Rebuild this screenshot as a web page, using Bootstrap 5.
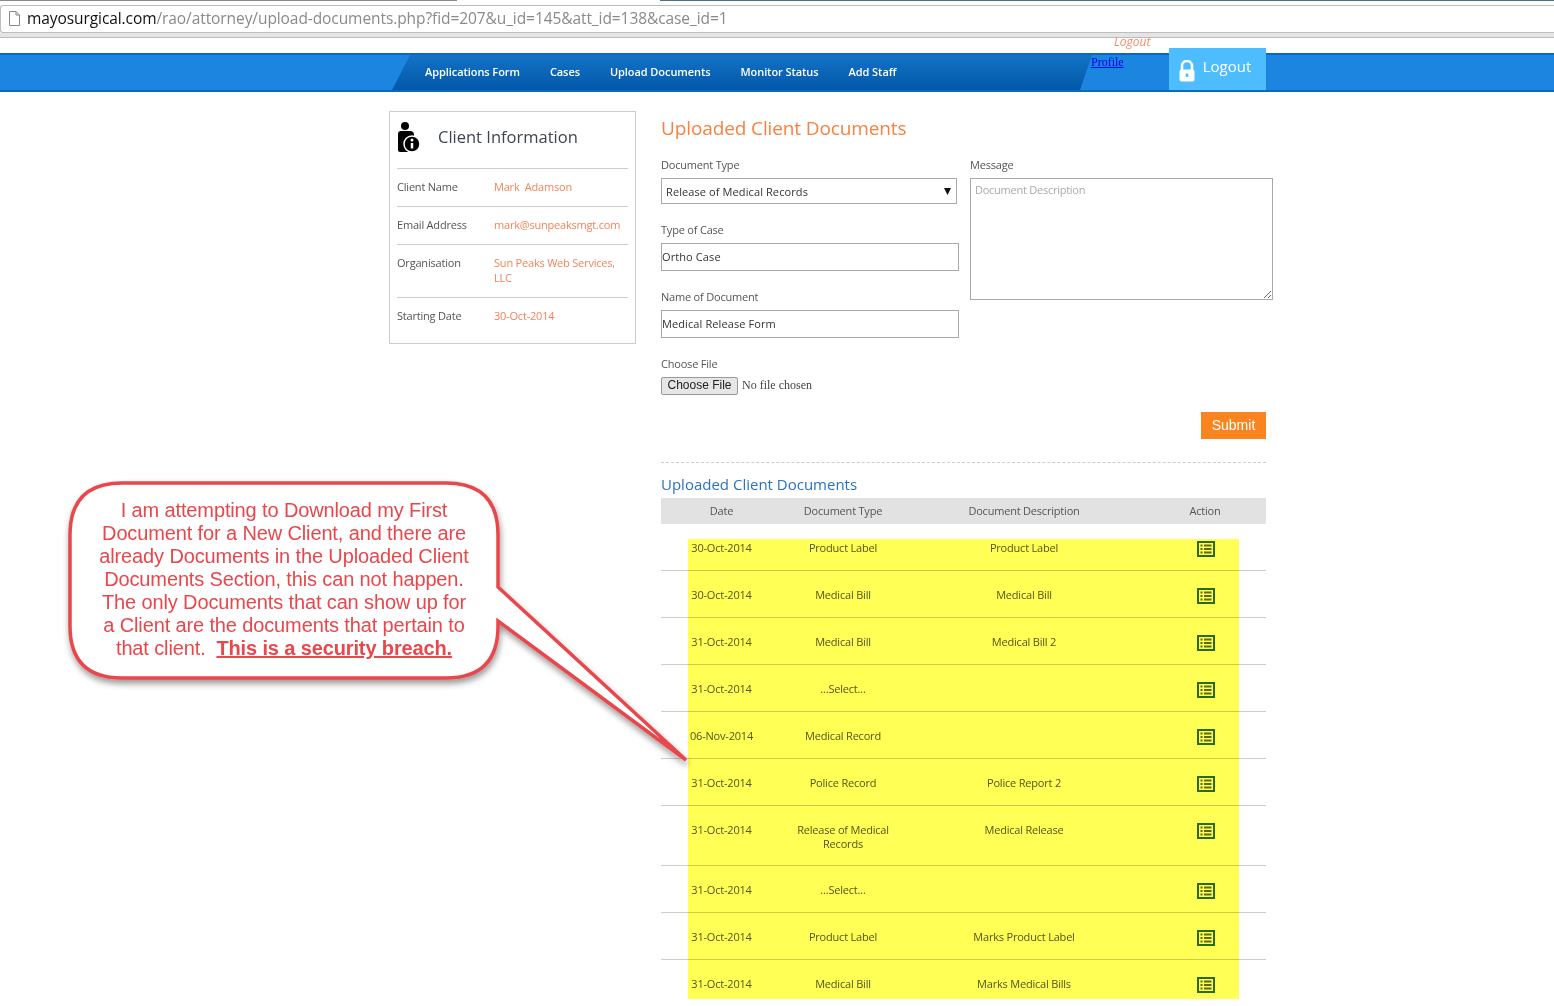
<!doctype html>
<html lang="en">
<head>
  <meta charset="utf-8" />
  <meta name="viewport" content="width=device-width, initial-scale=1" />
  <title>Upload Documents</title>
  <link href="https://cdn.jsdelivr.net/npm/bootstrap@5.3.6/dist/css/bootstrap.min.css" rel="stylesheet" />
  <style>
    html, body { height: 1006px; overflow: hidden; }
    body { position: relative; font-family: "Open Sans", sans-serif; font-size: 11px; line-height: 15px; letter-spacing: -.2px; color: #555; background: #fff; }

    .top-strip { height: 5px; }
    .top-strip div { height: 1px; }
    .strip-a { width: 457px; background: #8a8a8a; }
    .strip-b { width: 203px; }
    .strip-c { flex: 1; background: #4f6f8f; }
    .address-bar { height: 28px; border: 1px solid #bdbdbd; border-radius: 3px 0 0 3px; border-right: 0; background: #fff; padding: 0 0 2px 8px; gap: 7px; }
    .address-bar span { font-size: 15.5px; color: #8a8a8a; letter-spacing: -.08px; white-space: nowrap; }
    .address-bar b { font-weight: 400; color: #111; }
    .bar-under { height: 4px; background: #e4e4e4; border-bottom: 1px solid #bdbdbd; box-sizing: content-box; }

    .blue-bar { margin-top: 15px; height: 39px; background: #1c85e0; border-top: 2px solid #0a68bd; border-bottom: 2px solid #0a68bd; position: relative; }
    .dark-part { margin-left: 392px; width: 700px; padding: 0 0 2px 33px; gap: 30px; background: linear-gradient(#1472c6, #0258a8); clip-path: polygon(18px 0, 100% 0, calc(100% - 12px) 100%, 0 100%); }
    .dark-part .nav-link { padding: 0; color: #fff; font-size: 11px; font-weight: 600; letter-spacing: -.07px; }
    .profile-link { margin: 0 0 0 -1px; font-family: "Liberation Serif", serif; font-size: 12px; line-height: 14px; letter-spacing: 0; color: #00e; }
    .logout-btn { margin: -7px 0 0 45px; width: 97px; height: 42px; padding-left: 10px; gap: 8px; background: #4dbdff; color: #fff; font-size: 15px; letter-spacing: 0; text-decoration: none; }
    .logout-btn span { margin-bottom: 6px; }
    .logout-btn svg { margin-top: 3px; }
    .logout-small { position: absolute; left: 1114px; top: -21px; font-size: 12px; letter-spacing: 0; font-style: italic; color: #f58a66; }

    .page-main { padding: 19px 0 0 389px; gap: 25px; }
    .info-box { width: 247px; height: 233px; border: 1px solid #ccc; padding: 0 7px; flex-shrink: 0; }
    .info-head { height: 57px; gap: 15px; border-bottom: 1px solid #ccc; }
    .info-head svg { margin-bottom: 6px; }
    .info-head h4 { margin: 0 0 6px; font-size: 16.500px; line-height: 24px; letter-spacing: 0; font-weight: 400; color: #3c4650; }
    .info-row { padding: 10px 0 12px; border-bottom: 1px solid #ccc; }
    .info-row:last-child { border-bottom: 0; }
    .info-row .lbl { width: 97px; flex-shrink: 0; }
    .info-row .val { color: #f5835a; }

    .right-part { width: 605px; flex-shrink: 0; }
    .page-title { margin: 4px 0 15px; font-size: 19px; line-height: 27px; letter-spacing: -.12px; font-weight: 400; color: #f58242; }
    .form-cols { gap: 11px; width: 620px; }
    .left-form { width: 298px; }
    .right-form { width: 303px; }
    .field-lbl { display: block; margin-bottom: 6px; }
    .field-gap { margin-top: 18px; }
    .sel-field { width: 296px; height: 26px; padding: 1px 4px 0; border: 1px solid #aaa; border-radius: 0; font-size: 11px; line-height: 23px; letter-spacing: .1px; color: #333; background-size: 9px 8px; background-position: right 4px center; background-image: url("data:image/svg+xml,%3Csvg xmlns='http://www.w3.org/2000/svg' viewBox='0 0 9 8'%3E%3Cpath d='M1 1h7L4.500 8z' fill='%23111'/%3E%3C/svg%3E"); }
    .txt-field { height: 28px; padding: 0 0 2px 0; border: 1px solid #aaa; border-radius: 0; font-size: 11px; letter-spacing: .1px; color: #333; }
    .area-field { height: 122px; padding: 3px 4px; border: 1px solid #aaa; border-radius: 0; font-size: 11px; line-height: 15px; letter-spacing: -.25px; color: #333; }
    .area-field::placeholder { color: #aaa; }
    .file-field { display: block; height: 18px; font-family: "Liberation Serif", serif; font-size: 12px; letter-spacing: 0; color: #444; }
    .file-field::file-selector-button { height: 18px; padding: 0 5.500px 1px; margin-right: 4px; font-family: "Liberation Sans", sans-serif; font-size: 12px; color: #222; background: #e6e6e6; border: 1px solid #999; border-radius: 2px; }
    .submit-btn { margin-top: 17px; width: 65px; height: 27px; padding: 0; border: 0; border-radius: 0; background: #f98420; color: #fff; font-family: "Liberation Sans", sans-serif; font-size: 14px; letter-spacing: 0; }
    .dash-line { margin-top: 23px; border-top: 1px dashed #ccc; }
    .sub-title { margin: 10px 0 3px; font-size: 15px; line-height: 22px; letter-spacing: 0; font-weight: 400; color: #2a72c0; }

    .docs-table { table-layout: fixed; width: 605px; margin: 0; font-size: 11px; line-height: 14px; color: #555; }
    .docs-table th { height: 26px; padding: 0; font-weight: 400; text-align: center; vertical-align: middle; background: #e2e2e2; border: 0; color: #555; }
    .docs-table td { height: 47px; padding: 17px 4px 14px; text-align: center; vertical-align: top; border: 0; border-bottom: 1px solid #ccc; color: #555; background: transparent; }
    .docs-table tbody tr:first-child td { height: 46px; }
    .docs-table .act-cell { padding: 17px 3px 0 5px; line-height: 0; }
    .docs-table td:first-child { padding-left: 0; padding-right: 0; }

    .yellow-mark { position: absolute; left: 688px; top: 539px; width: 551px; height: 460px; background: #ffff55; mix-blend-mode: multiply; pointer-events: none; }
    .bubble-svg { position: absolute; left: 0; top: 0; width: 1554px; height: 1006px; pointer-events: none; }
    .bubble-text { position: absolute; left: 70px; top: 499px; width: 428px; text-align: center; font-family: "Liberation Sans", sans-serif; font-size: 20px; line-height: 23px; letter-spacing: -.13px; color: #e8474c; white-space: nowrap; }
    .bubble-text strong { text-decoration: underline; }
  </style>
</head>
<body>
  <div class="top-strip d-flex"><div class="strip-a"></div><div class="strip-b"></div><div class="strip-c"></div></div>
  <div class="address-bar d-flex align-items-center">
    <svg width="11" height="15" viewBox="0 0 11 15"><path d="M.5.500h6.500l3.500 3.500v10.500h-10zM7 .500v3.500h3.500" fill="#fff" stroke="#888"/></svg>
    <span><b>mayosurgical.com</b>/rao/attorney/upload-documents.php?fid=207&amp;u_id=145&amp;att_id=138&amp;case_id=1</span>
  </div>
  <div class="bar-under"></div>

  <div class="blue-bar d-flex">
    <span class="logout-small">Logout</span>
    <nav class="nav dark-part align-items-center flex-nowrap">
      <a class="nav-link" href="#">Applications Form</a>
      <a class="nav-link" href="#">Cases</a>
      <a class="nav-link" href="#">Upload Documents</a>
      <a class="nav-link" href="#">Monitor Status</a>
      <a class="nav-link" href="#">Add Staff</a>
    </nav>
    <a class="profile-link" href="#">Profile</a>
    <a class="logout-btn d-flex align-items-center" href="#">
      <svg width="16" height="22" viewBox="0 0 16 22"><path d="M3 10V6a5 5 0 0 1 10 0v4" fill="none" stroke="#fff" stroke-width="2.500"/><rect x="0.500" y="9.500" width="15" height="12" rx="2" fill="#fff"/><path d="M8 13.500v3.500" stroke="#4dbdff" stroke-width="2.500"/></svg>
      <span>Logout</span>
    </a>
  </div>

  <div class="page-main d-flex align-items-start">
    <div class="info-box">
      <div class="info-head d-flex align-items-center">
        <svg width="26" height="32" viewBox="0 0 26 32">
          <circle cx="8" cy="5" r="4" fill="#000"/>
          <path d="M1 13q0-3 3-3h9q4 0 4 4v15q0 2-3 2H3q-2 0-2-2z" fill="#000"/>
          <circle cx="15" cy="23" r="8" fill="#000" stroke="#fff" stroke-width="1.500"/>
          <circle cx="15" cy="19" r="1.500" fill="#fff"/>
          <path d="M15 22v5.500" stroke="#fff" stroke-width="2.500"/>
        </svg>
        <h4>Client Information</h4>
      </div>
      <div class="info-row d-flex"><div class="lbl">Client Name</div><div class="val">Mark&nbsp; Adamson</div></div>
      <div class="info-row d-flex"><div class="lbl">Email Address</div><div class="val">mark@sunpeaksmgt.com</div></div>
      <div class="info-row d-flex"><div class="lbl">Organisation</div><div class="val">Sun Peaks Web Services, LLC</div></div>
      <div class="info-row d-flex"><div class="lbl">Starting Date</div><div class="val">30-Oct-2014</div></div>
    </div>

    <div class="right-part">
      <h2 class="page-title">Uploaded Client Documents</h2>
      <form>
        <div class="form-cols d-flex">
          <div class="left-form">
            <label class="field-lbl">Document Type</label>
            <select class="form-select sel-field"><option>Release of Medical Records</option></select>
            <label class="field-lbl field-gap">Type of Case</label>
            <input class="form-control txt-field" type="text" value="Ortho Case" />
            <label class="field-lbl field-gap">Name of Document</label>
            <input class="form-control txt-field" type="text" value="Medical Release Form" />
            <label class="field-lbl field-gap">Choose File</label>
            <input class="file-field" type="file" />
          </div>
          <div class="right-form">
            <label class="field-lbl">Message</label>
            <textarea class="form-control area-field" placeholder="Document Description"></textarea>
          </div>
        </div>
        <div class="d-flex justify-content-end"><button type="button" class="btn submit-btn">Submit</button></div>
      </form>
      <div class="dash-line"></div>
      <h3 class="sub-title">Uploaded Client Documents</h3>
      <table class="table docs-table">
        <colgroup><col style="width:121px"><col style="width:122px"><col style="width:240px"><col style="width:122px"></colgroup>
        <thead><tr><th>Date</th><th>Document Type</th><th>Document Description</th><th>Action</th></tr></thead>
        <tbody id="docRows"></tbody>
      </table>
    </div>
  </div>

  <div class="yellow-mark"></div>

  <svg class="bubble-svg" viewBox="0 0 1554 1006">
    <defs><filter id="bubbleShadow" x="-10%" y="-10%" width="120%" height="120%"><feDropShadow dx="1" dy="4" stdDeviation="3" flood-color="#000" flood-opacity=".4"/></filter></defs>
    <path d="M122 483H446Q498 483 498 535V587L686 760L498 621V626Q498 678 446 678H122Q70 678 70 626V535Q70 483 122 483Z" fill="#fff" stroke="#e8474c" stroke-width="3.500" stroke-linejoin="miter" filter="url(#bubbleShadow)"/>
  </svg>
  <div class="bubble-text">I am attempting to Download my First<br>Document for a New Client, and there are<br>already Documents in the Uploaded Client<br>Documents Section, this can not happen.<br>The only Documents that can show up for<br>a Client are the documents that pertain to<br>that client.&nbsp; <strong>This is a security breach.</strong></div>

  <script>
    const docs = [
      ["30-Oct-2014", "Product Label", "Product Label"],
      ["30-Oct-2014", "Medical Bill", "Medical Bill"],
      ["31-Oct-2014", "Medical Bill", "Medical Bill 2"],
      ["31-Oct-2014", "...Select...", ""],
      ["06-Nov-2014", "Medical Record", ""],
      ["31-Oct-2014", "Police Record", "Police Report 2"],
      ["31-Oct-2014", "Release of Medical Records", "Medical Release"],
      ["31-Oct-2014", "...Select...", ""],
      ["31-Oct-2014", "Product Label", "Marks Product Label"],
      ["31-Oct-2014", "Medical Bill", "Marks Medical Bills"]
    ];
    const listIcon = `<svg width="18" height="16" viewBox="0 0 18 16"><rect x="1" y="1" width="16" height="14" fill="#fff" stroke="#2a6b3a" stroke-width="2"/><path d="M3.500 4.500h2M7 4.500h7.500M3.500 8h2M7 8h7.500M3.500 11.500h2M7 11.500h7.500" stroke="#5c6a1c" stroke-width="1.800"/></svg>`;
    document.getElementById("docRows").innerHTML = docs.map(d => `
      <tr><td>${d[0]}</td><td>${d[1]}</td><td>${d[2]}</td><td class="act-cell">${listIcon}</td></tr>`).join("");
  </script>
  <script src="https://cdn.jsdelivr.net/npm/bootstrap@5.3.6/dist/js/bootstrap.bundle.min.js"></script>
</body>
</html>
